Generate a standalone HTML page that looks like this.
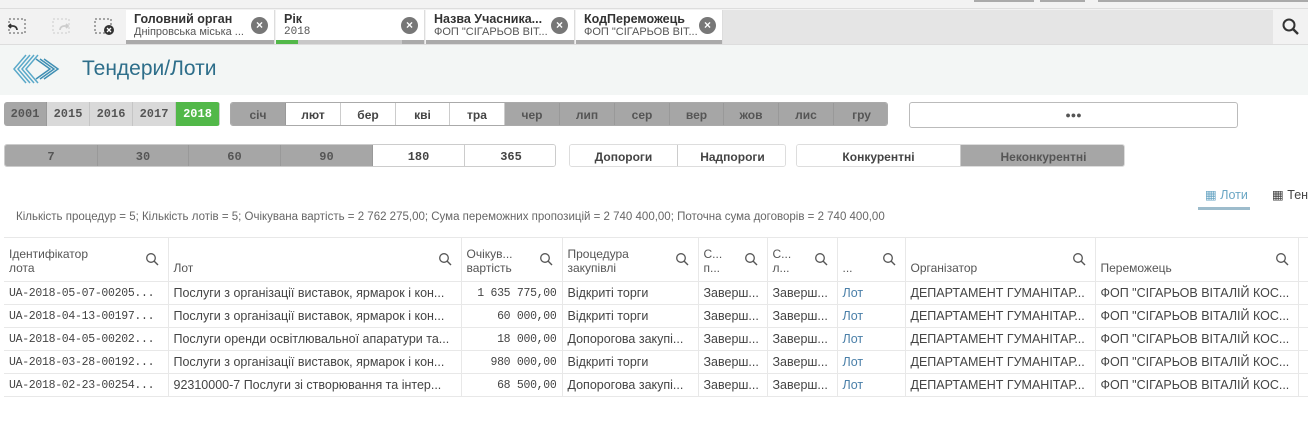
<!DOCTYPE html>
<html><head><meta charset="utf-8"><style>
*{box-sizing:border-box;margin:0;padding:0}
body{width:1308px;height:424px;overflow:hidden;background:#fff;font-family:"Liberation Sans","DejaVu Sans",sans-serif;position:relative;color:#333}
.a{position:absolute}
.btn{position:absolute;display:flex;align-items:center;justify-content:center;font-size:12px;font-weight:bold;color:#444;border-right:1px solid #ccc}
.g{background:#a6a6a6;color:#555;border-right:1px solid #999}
.lg{background:#d9d9d9;color:#555;border-right:1px solid #c5c5c5}
.mono{font-family:"Liberation Mono","DejaVu Sans Mono",monospace}
.tab{position:absolute;top:10px;height:34px;background:#fff;border-right:1px solid #ddd;padding:2px 8px}
.tab b{display:block;font-size:12.5px;color:#333}
.tab span{display:block;font-size:11px;color:#555;white-space:nowrap}
.x{position:absolute;right:6px;top:7px;width:17px;height:17px;border-radius:50%;background:#777;color:#fff;font-size:12px;line-height:17px;text-align:center;font-weight:bold}
.bar{position:absolute;left:0;right:0;bottom:0;height:4px;background:#c8c8c8}
table{position:absolute;left:4px;top:237px;border-collapse:collapse;font-size:12.5px;table-layout:fixed;width:1314px}
td,th{border:1px solid #e8e8e8;height:23px;padding:0 5px;white-space:nowrap;overflow:hidden;color:#444;font-weight:normal;text-align:left}
tr td:first-child,tr th:first-child{border-left:none}
th{height:44px;vertical-align:bottom;padding-bottom:6px;color:#555;position:relative;font-size:12px}
th svg{position:absolute;right:9px;top:14px}
.r{text-align:right}
.lnk{color:#4a7fa8}
td.mono{font-size:11.5px;letter-spacing:-0.3px}
</style></head><body>
<div class="a" style="left:0;top:0;width:1308px;height:9px;background:#f2f2f2;border-bottom:1px solid #ddd"></div>
<div class="a" style="left:974px;top:0;width:60px;height:2px;background:#aaa"></div>
<div class="a" style="left:1040px;top:0;width:45px;height:2px;background:#aaa"></div>
<div class="a" style="left:1098px;top:0;width:210px;height:2px;background:#aaa"></div>
<div class="a" style="left:0;top:9px;width:1308px;height:36px;background:#f2f2f2;border-bottom:1px solid #ddd"></div>
<div class="a" style="left:723px;top:10px;width:550px;height:34px;background:#e5e5e5"></div>
<div class="a" style="left:1273px;top:10px;width:35px;height:34px;background:#f2f2f2;text-align:center">
<svg width="18" height="18" viewBox="0 0 18 18" style="margin-top:8px"><circle cx="7" cy="7" r="5.5" fill="none" stroke="#333" stroke-width="2"/><path d="M11 11l5 5" stroke="#333" stroke-width="2.4"/></svg></div>
<svg class="a" style="left:6px;top:16px" width="24" height="22"><rect x="3" y="3" width="16" height="14" fill="none" stroke="#555" stroke-dasharray="2,2"/><path d="M11 14a4 4 0 0 0-4-4H3M5 8l-2 2 2 2" fill="none" stroke="#333" stroke-width="1.8"/></svg>
<svg class="a" style="left:50px;top:16px" width="24" height="22"><rect x="3" y="3" width="16" height="14" fill="none" stroke="#ccc" stroke-dasharray="2,2"/><path d="M10 14a4 4 0 0 1 4-4h4M16 8l2 2-2 2" fill="none" stroke="#ccc" stroke-width="1.8"/></svg>
<svg class="a" style="left:94px;top:16px" width="24" height="22"><rect x="1" y="3" width="16" height="14" fill="none" stroke="#555" stroke-dasharray="2,2"/><circle cx="15" cy="14" r="5" fill="#333"/><path d="M13 12l4 4M17 12l-4 4" stroke="#fff" stroke-width="1.3"/></svg>
<div class="tab" style="left:126px;width:149px"><b>Головний орган</b><span>Дніпровська міська ...</span><div class="x">×</div><div class="bar" style="background:#aaa"></div></div>
<div class="tab" style="left:276px;width:149px"><b>Рік</b><span class="mono">2018</span><div class="x">×</div><div class="bar"><div style="width:22px;height:4px;background:#52b849"></div><div style="position:absolute;right:0;top:0;width:22px;height:4px;background:#aaa"></div></div></div>
<div class="tab" style="left:426px;width:149px"><b>Назва Учасника...</b><span>ФОП "СІГАРЬОВ ВІТ...</span><div class="x">×</div><div class="bar" style="background:#aaa"></div></div>
<div class="tab" style="left:576px;width:147px"><b>КодПереможець</b><span>ФОП "СІГАРЬОВ ВІТ...</span><div class="x">×</div><div class="bar" style="background:#aaa"></div></div>
<div class="a" style="left:0;top:45px;width:1308px;height:50px;background:#f3f6f5"></div>
<svg class="a" style="left:12px;top:53px" width="48" height="32" viewBox="0 0 48 32"><g stroke="#5aa9c9" stroke-width="1.5" fill="none"><path d="M14 2L2 16l12 14M18 2L6 16l12 14M22 2L10 16l12 14M26 2L14 16l12 14"/><path d="M24 6l14 10-14 10M28 6l14 10-14 10M32 6l14 10-14 10" stroke="#3f8fb3"/></g></svg>
<div class="a" style="left:82px;top:57px;font-size:21px;color:#2d6e8a">Тендери/Лоти</div>
<div class="a" style="left:4px;top:102px;width:216px;height:24px;border-radius:3px;overflow:hidden">
<div class="btn g mono" style="left:0;width:43px;height:24px">2001</div>
<div class="btn lg mono" style="left:43px;width:43px;height:24px">2015</div>
<div class="btn lg mono" style="left:86px;width:43px;height:24px">2016</div>
<div class="btn lg mono" style="left:129px;width:43px;height:24px">2017</div>
<div class="btn mono" style="left:172px;width:44px;height:24px;background:#52b849;color:#fff">2018</div></div>
<div class="a" style="left:230px;top:102px;width:658px;height:24px;border-radius:3px;overflow:hidden;border:1px solid #aaa">
<div class="btn g" style="left:0;width:55px;height:24px">січ</div>
<div class="btn" style="left:55px;width:55px;height:24px;background:#fff">лют</div>
<div class="btn" style="left:110px;width:55px;height:24px;background:#fff">бер</div>
<div class="btn" style="left:165px;width:54px;height:24px;background:#fff">кві</div>
<div class="btn" style="left:219px;width:55px;height:24px;background:#fff">тра</div>
<div class="btn g" style="left:274px;width:55px;height:24px">чер</div>
<div class="btn g" style="left:329px;width:55px;height:24px">лип</div>
<div class="btn g" style="left:384px;width:55px;height:24px">сер</div>
<div class="btn g" style="left:439px;width:54px;height:24px">вер</div>
<div class="btn g" style="left:493px;width:55px;height:24px">жов</div>
<div class="btn g" style="left:548px;width:55px;height:24px">лис</div>
<div class="btn g" style="left:603px;width:55px;height:24px;border:none">гру</div></div>
<div class="a" style="left:909px;top:102px;width:329px;height:26px;border:1px solid #bbb;border-radius:3px;text-align:center;font-size:9px;line-height:24px;color:#555">●●●</div>
<div class="a" style="left:4px;top:144px;width:552px;height:23px;border-radius:3px;overflow:hidden;border:1px solid #ccc">
<div class="btn g mono" style="left:0;width:93px;height:23px">7</div>
<div class="btn g mono" style="left:93px;width:91px;height:23px">30</div>
<div class="btn g mono" style="left:184px;width:92px;height:23px">60</div>
<div class="btn g mono" style="left:276px;width:92px;height:23px">90</div>
<div class="btn mono" style="left:368px;width:92px;height:23px;background:#fff">180</div>
<div class="btn mono" style="left:460px;width:92px;height:23px;background:#fff;border:none">365</div></div>
<div class="a" style="left:569px;top:144px;width:217px;height:23px;border-radius:3px;overflow:hidden;border:1px solid #ddd">
<div class="btn" style="left:0;width:108px;height:23px;background:#fff">Допороги</div>
<div class="btn" style="left:108px;width:109px;height:23px;background:#fff;border:none">Надпороги</div></div>
<div class="a" style="left:796px;top:144px;width:329px;height:23px;border-radius:3px;overflow:hidden;border:1px solid #ddd">
<div class="btn" style="left:0;width:164px;height:23px;background:#fff">Конкурентні</div>
<div class="btn g" style="left:164px;width:165px;height:23px;border:none">Неконкурентні</div></div>
<div class="a" style="left:1205px;top:187px;font-size:12.5px;color:#6aa6c4;white-space:nowrap">▦ Лоти</div>
<div class="a" style="left:1198px;top:207px;width:52px;height:3px;background:#9dbccc"></div>
<div class="a" style="left:1272px;top:187px;font-size:12.5px;color:#444;white-space:nowrap">▦ Тен</div>
<div class="a" style="left:16px;top:211px;font-size:11.5px;color:#666;white-space:nowrap">Кількість процедур = 5; Кількість лотів = 5; Очікувана вартість = 2 762 275,00; Сума переможних пропозицій = 2 740 400,00; Поточна сума договорів = 2 740 400,00</div>
<table>
<colgroup><col style="width:164px"><col style="width:293px"><col style="width:101px"><col style="width:136px"><col style="width:69px"><col style="width:70px"><col style="width:68px"><col style="width:190px"><col style="width:203px"><col style="width:20px"></colgroup>
<tr><th>Ідентифікатор<br>лота<svg width="14" height="14"><circle cx="6" cy="6" r="4.3" fill="none" stroke="#555" stroke-width="1.3"/><path d="M9 9l4 4" stroke="#555" stroke-width="1.4"/></svg></th><th>Лот<svg width="14" height="14"><circle cx="6" cy="6" r="4.3" fill="none" stroke="#555" stroke-width="1.3"/><path d="M9 9l4 4" stroke="#555" stroke-width="1.4"/></svg></th><th>Очікув...<br>вартість<svg width="14" height="14"><circle cx="6" cy="6" r="4.3" fill="none" stroke="#555" stroke-width="1.3"/><path d="M9 9l4 4" stroke="#555" stroke-width="1.4"/></svg></th><th>Процедура<br>закупівлі<svg width="14" height="14"><circle cx="6" cy="6" r="4.3" fill="none" stroke="#555" stroke-width="1.3"/><path d="M9 9l4 4" stroke="#555" stroke-width="1.4"/></svg></th><th>С...<br>п...<svg width="14" height="14"><circle cx="6" cy="6" r="4.3" fill="none" stroke="#555" stroke-width="1.3"/><path d="M9 9l4 4" stroke="#555" stroke-width="1.4"/></svg></th><th>С...<br>л...<svg width="14" height="14"><circle cx="6" cy="6" r="4.3" fill="none" stroke="#555" stroke-width="1.3"/><path d="M9 9l4 4" stroke="#555" stroke-width="1.4"/></svg></th><th>...<svg width="14" height="14"><circle cx="6" cy="6" r="4.3" fill="none" stroke="#555" stroke-width="1.3"/><path d="M9 9l4 4" stroke="#555" stroke-width="1.4"/></svg></th><th>Організатор<svg width="14" height="14"><circle cx="6" cy="6" r="4.3" fill="none" stroke="#555" stroke-width="1.3"/><path d="M9 9l4 4" stroke="#555" stroke-width="1.4"/></svg></th><th>Переможець<svg width="14" height="14"><circle cx="6" cy="6" r="4.3" fill="none" stroke="#555" stroke-width="1.3"/><path d="M9 9l4 4" stroke="#555" stroke-width="1.4"/></svg></th><th></th></tr>
<tr><td class="mono">UA-2018-05-07-00205...</td><td>Послуги з організації виставок, ярмарок і кон...</td><td class="r mono">1 635 775,00</td><td>Відкриті торги</td><td>Заверш...</td><td>Заверш...</td><td class="lnk">Лот</td><td>ДЕПАРТАМЕНТ ГУМАНІТАР...</td><td>ФОП "СІГАРЬОВ ВІТАЛІЙ КОС...</td><td></td></tr>
<tr><td class="mono">UA-2018-04-13-00197...</td><td>Послуги з організації виставок, ярмарок і кон...</td><td class="r mono">60 000,00</td><td>Відкриті торги</td><td>Заверш...</td><td>Заверш...</td><td class="lnk">Лот</td><td>ДЕПАРТАМЕНТ ГУМАНІТАР...</td><td>ФОП "СІГАРЬОВ ВІТАЛІЙ КОС...</td><td></td></tr>
<tr><td class="mono">UA-2018-04-05-00202...</td><td>Послуги оренди освітлювальної апаратури та...</td><td class="r mono">18 000,00</td><td>Допорогова закупі...</td><td>Заверш...</td><td>Заверш...</td><td class="lnk">Лот</td><td>ДЕПАРТАМЕНТ ГУМАНІТАР...</td><td>ФОП "СІГАРЬОВ ВІТАЛІЙ КОС...</td><td></td></tr>
<tr><td class="mono">UA-2018-03-28-00192...</td><td>Послуги з організації виставок, ярмарок і кон...</td><td class="r mono">980 000,00</td><td>Відкриті торги</td><td>Заверш...</td><td>Заверш...</td><td class="lnk">Лот</td><td>ДЕПАРТАМЕНТ ГУМАНІТАР...</td><td>ФОП "СІГАРЬОВ ВІТАЛІЙ КОС...</td><td></td></tr>
<tr><td class="mono">UA-2018-02-23-00254...</td><td>92310000-7 Послуги зі створювання та інтер...</td><td class="r mono">68 500,00</td><td>Допорогова закупі...</td><td>Заверш...</td><td>Заверш...</td><td class="lnk">Лот</td><td>ДЕПАРТАМЕНТ ГУМАНІТАР...</td><td>ФОП "СІГАРЬОВ ВІТАЛІЙ КОС...</td><td></td></tr>
</table>
</body></html>
